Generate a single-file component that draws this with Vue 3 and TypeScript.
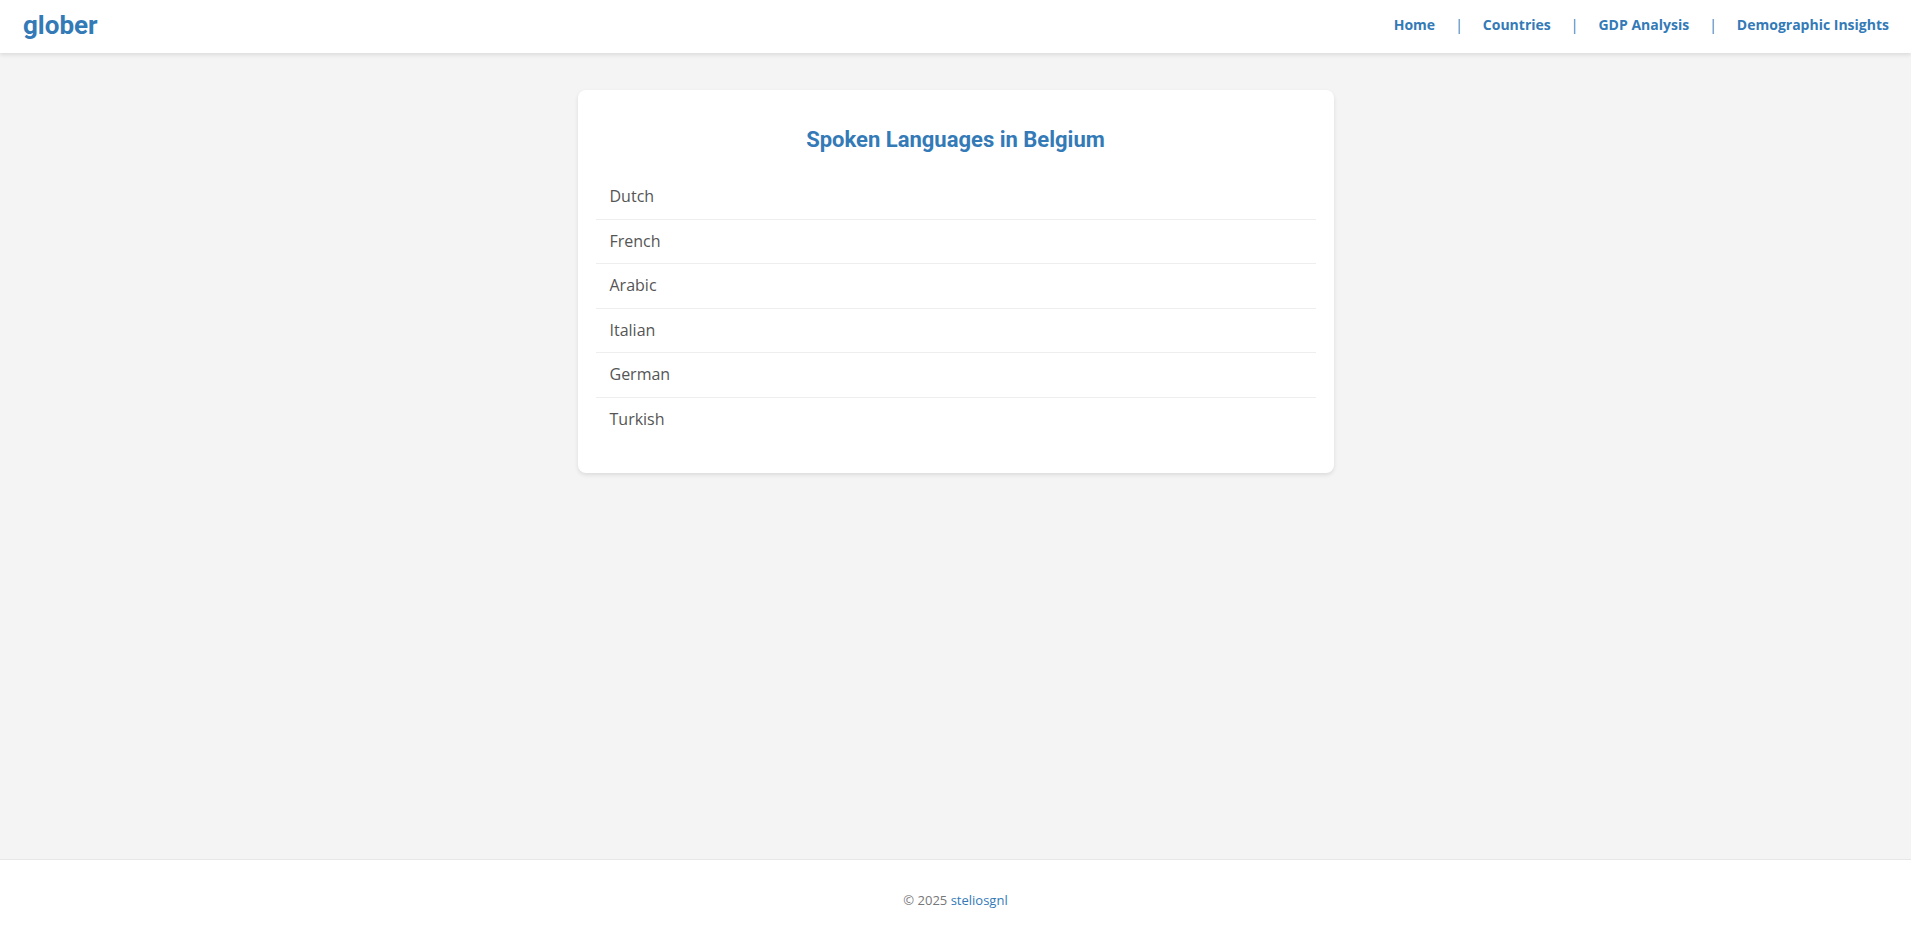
<script setup lang="ts">
interface NavLink {
  label: string
  href: string
}

const links: NavLink[] = [
  { label: 'Home', href: '#home' },
  { label: 'Countries', href: '#countries' },
  { label: 'GDP Analysis', href: '#gdp' },
  { label: 'Demographic Insights', href: '#demographics' },
]

const country = 'Belgium'
const languages: string[] = ['Dutch', 'French', 'Arabic', 'Italian', 'German', 'Turkish']
</script>

<template>
  <div class="page">
    <header class="header">
      <a class="logo" href="#home">glober</a>
      <nav class="nav" aria-label="Main">
        <template v-for="(link, i) in links" :key="link.href">
          <span v-if="i > 0" class="separator" aria-hidden="true">|</span>
          <a class="nav-link" :href="link.href">{{ link.label }}</a>
        </template>
      </nav>
    </header>

    <main class="content">
      <section class="card">
        <h1 class="title">Spoken Languages in {{ country }}</h1>
        <ul class="list">
          <li v-for="language in languages" :key="language" class="item">{{ language }}</li>
        </ul>
      </section>
    </main>

    <footer class="footer">
      <p class="copyright">© 2025 <a class="author" href="#author">steliosgnl</a></p>
    </footer>
  </div>
</template>

<style>
body {
  margin: 0;
  background: #f4f4f4;
}
</style>

<style scoped>
.page {
  display: flex;
  flex-direction: column;
  min-height: 100vh;
  font-family: "Open Sans", sans-serif;
  font-size: 16px;
  line-height: 1.6;
  color: #555;
}

.page a {
  color: #337ab7;
  text-decoration: none;
}

.header {
  display: flex;
  align-items: center;
  justify-content: space-between;
  box-sizing: border-box;
  min-height: 53px;
  padding: 0 22px 2px 23px;
  background: #fff;
  box-shadow: 0 2px 4px rgba(0, 0, 0, 0.1);
}

.logo {
  font-family: Roboto, sans-serif;
  font-size: 26px;
  font-weight: 700;
}

.nav {
  display: flex;
  gap: 20px;
  font-size: 14px;
  color: #337ab7;
}

.nav-link {
  font-weight: 700;
}

.content {
  flex: 1;
  padding: 37px 18px;
}

.card {
  box-sizing: border-box;
  max-width: 756px;
  margin: 0 auto;
  padding: 32px 18px 31px;
  background: #fff;
  border-radius: 8px;
  box-shadow: 0 2px 4px rgba(0, 0, 0, 0.1);
}

.title {
  margin: 0 0 18px;
  font-family: Roboto, sans-serif;
  font-size: 22px;
  font-weight: 700;
  line-height: 35px;
  text-align: center;
  color: #337ab7;
}

.list {
  margin: 0;
  padding: 0;
  list-style: none;
}

.item {
  padding: 9px 14px;
  border-bottom: 1px solid #eee;
}

.item:last-child {
  border-bottom: 0;
}

.footer {
  padding: 30px 18px 24px;
  border-top: 1px solid #e7e7e7;
  background: #fff;
  text-align: center;
  font-size: 13px;
  color: #777;
}

.copyright {
  margin: 0;
}
</style>
